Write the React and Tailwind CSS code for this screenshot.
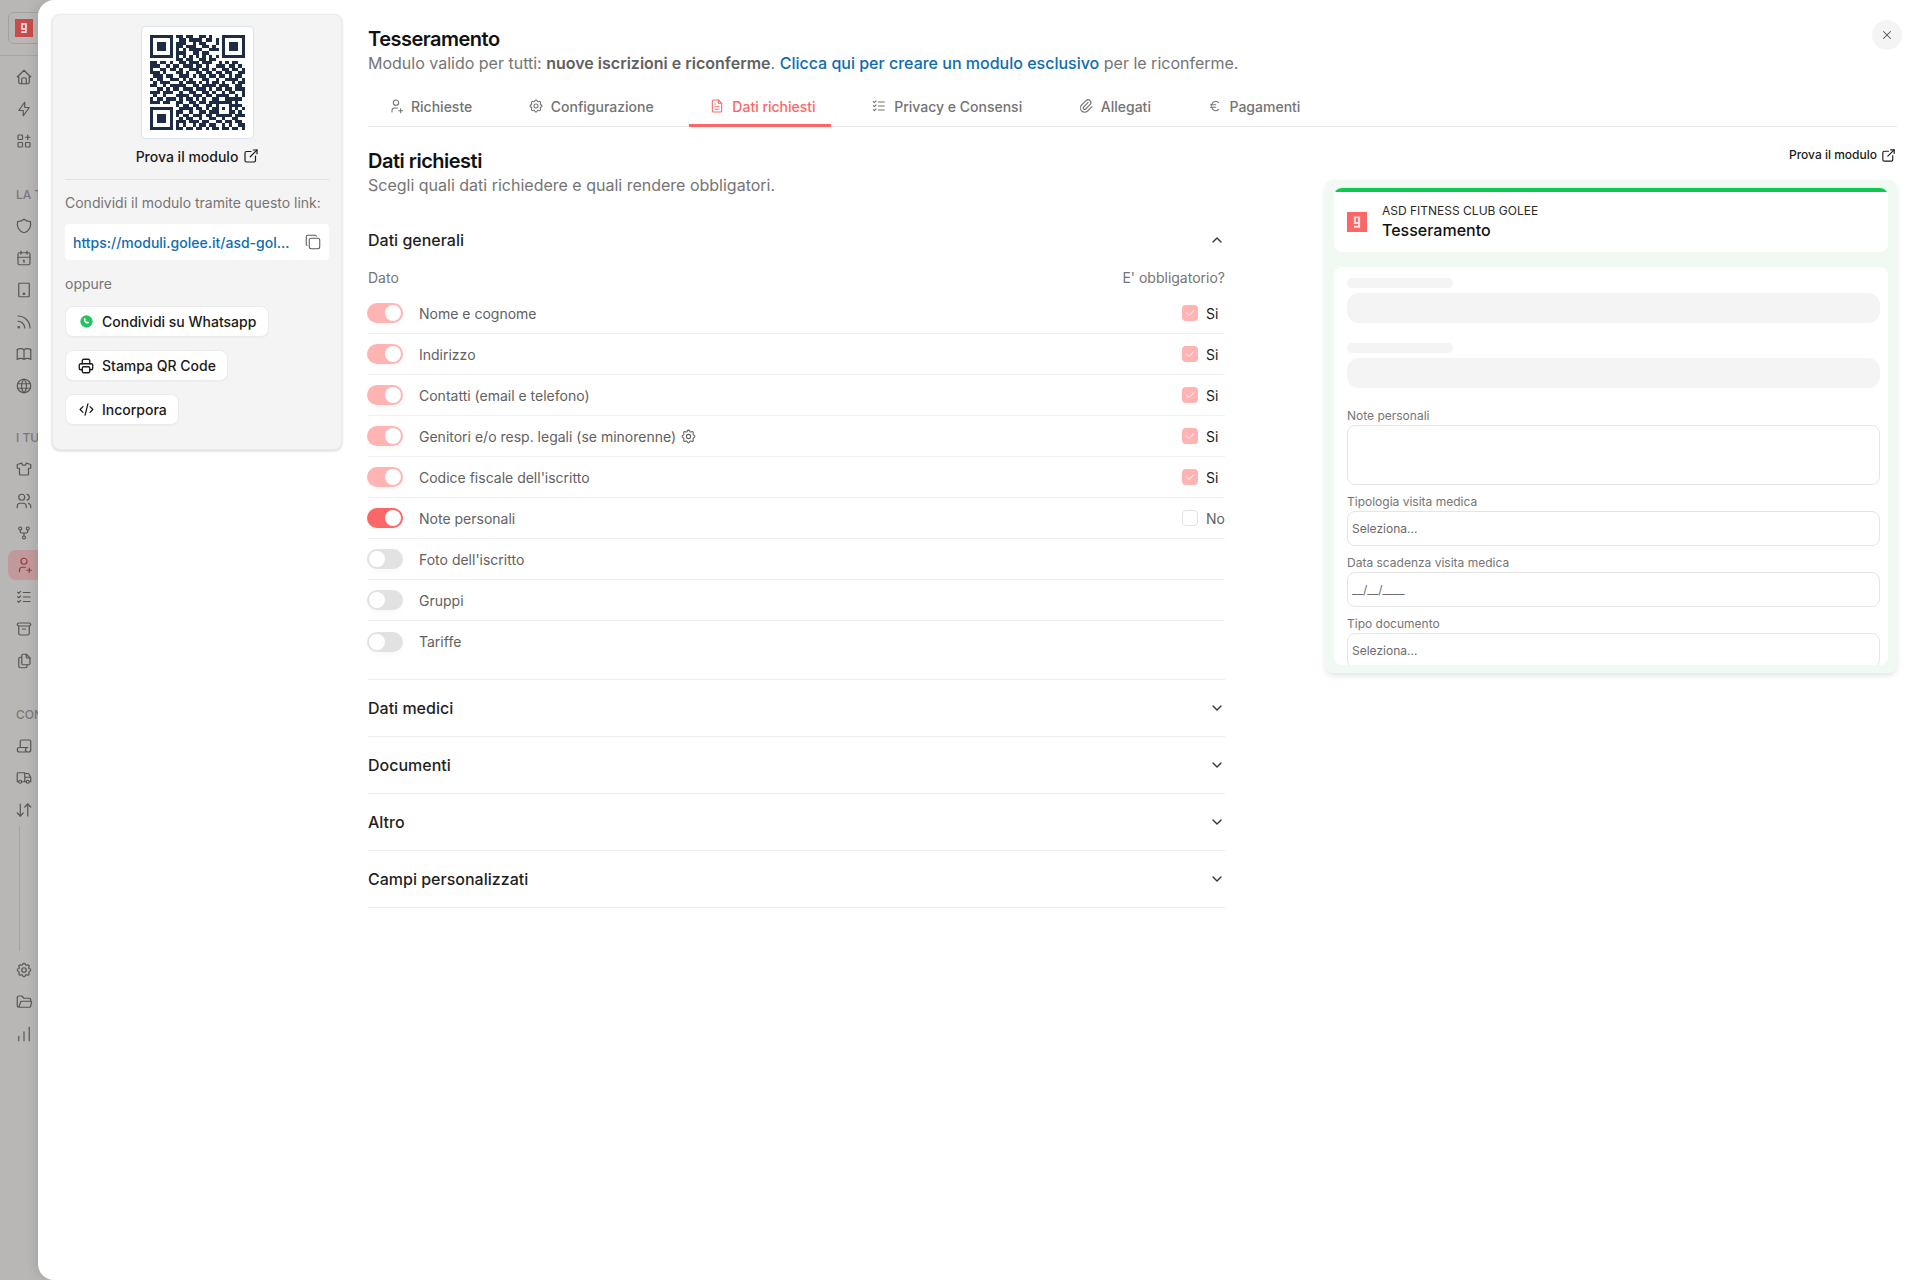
import React from "react";
import {
  TbHome, TbBolt, TbApps, TbShield, TbCalendar, TbDeviceTablet, TbRss, TbBook, TbWorld,
  TbShirt, TbUsers, TbGitFork, TbUserPlus, TbListCheck, TbArchive, TbFiles, TbScript,
  TbTruck, TbSettings, TbFolderOpen, TbExternalLink, TbCopy, TbPrinter, TbCode,
  TbFileText, TbPaperclip, TbCurrencyEuro, TbChevronUp, TbChevronDown, TbX, TbCheck,
} from "react-icons/tb";
import { ArrowDownUp, ChartNoAxesColumnIncreasing } from "lucide-react";

const QR = [
  "11111110110110011010001111111",
  "10000010011011110110101000001",
  "10111010111001011000101011101",
  "10111010110111001101001011101",
  "10111010101011110011101011101",
  "10000010111001101100001000001",
  "11111110101010101010101111111",
  "00000000110110011011000000000",
  "11011010011011101110010101100",
  "11100101101110110100111011010",
  "10011011010011101101001101101",
  "11101000110100110110110110011",
  "01110110011101011011011010110",
  "10110011101010001100100111101",
  "01011100010111010101101001011",
  "11001011111001101111011100110",
  "00110101101110111010110110111",
  "11101110010011001101001011001",
  "01001000111101110110111100101",
  "10110111010110101001100111110",
  "11101100110011011011111110100",
  "00000000101101100110100011110",
  "11111110011110110101101010101",
  "10000010110010011011100011010",
  "10111010101101110110111110111",
  "10111010010110010011001001100",
  "10111010111011101100110110110",
  "10000010101001011011001010011",
  "11111110110110110101101101101",
];
const qrPath = QR.map((row, y) =>
  row.split("").map((c, x) => (c === "1" ? `M${x} ${y}h1v1h-1z` : "")).join("")
).join("");

function GoleeMark({ className }) {
  return (
    <svg viewBox="0 0 16 16" className={className}>
      <rect width="16" height="16" fill="currentColor" />
      <path d="M5.5 3.5h5v9h-5v-1.6h3.4v-1.4H5.5zM7 5v3h1.9V5z" fill="#fff" fillOpacity="0.8" fillRule="evenodd" />
    </svg>
  );
}

function WhatsappDot() {
  return (
    <svg viewBox="0 0 16 16" className="h-[13px] w-[13px]">
      <circle cx="8" cy="8" r="7.6" fill="#22c55e" />
      <path d="M5.6 4.2c.5-.3.9-.2 1.1.3l.4.9c.1.3 0 .5-.2.7l-.3.4c.4.9 1.1 1.6 2.1 2.1l.4-.4c.2-.2.5-.3.7-.2l.9.5c.4.2.5.6.3 1-.4.8-1.2 1.2-2.1 1-2.3-.6-4-2.3-4.3-4.5-.1-.9.3-1.7 1-2.3z" fill="#fff" />
    </svg>
  );
}

function SideIcon({ icon: Icon, active }) {
  if (active) {
    return (
      <div className="my-px ml-[8px] flex h-[30px] w-[30px] shrink-0 items-center rounded-l-lg bg-[#c09a9a] pl-[7px] text-[#9c3a3c]">
        <Icon size={18} strokeWidth={1.6} className="shrink-0" />
      </div>
    );
  }
  return (
    <div className="flex h-[32px] w-[38px] shrink-0 items-center pl-[15px] text-[#595555]">
      <Icon size={18} strokeWidth={1.6} className="shrink-0" />
    </div>
  );
}

function SideLabel({ children, className }) {
  return (
    <div className={`h-[16px] w-[38px] overflow-hidden whitespace-nowrap pl-[16px] text-[12px] font-medium leading-[16px] text-[#7c7777] ${className}`}>
      {children}
    </div>
  );
}

function Sidebar() {
  return (
    <aside className="flex h-[1280px] w-[38px] shrink-0 flex-col overflow-hidden bg-[#b9b6b6]">
      <div className="h-[56px] shrink-0 border-b border-[#a8a5a5] pl-[8px] pt-[12px]">
        <div className="h-[32px] w-[60px] rounded-md border border-[#a3a0a0] pl-[6px] pt-[6px]">
          <GoleeMark className="h-[18px] w-[18px] text-[#c84c4b]" />
        </div>
      </div>
      <div className="mt-[5px] flex flex-col">
        <SideIcon icon={TbHome} />
        <SideIcon icon={TbBolt} />
        <SideIcon icon={TbApps} />
      </div>
      <SideLabel className="mt-[30px]">LA TUA</SideLabel>
      <div className="mt-[7px] flex flex-col">
        <SideIcon icon={TbShield} />
        <SideIcon icon={TbCalendar} />
        <SideIcon icon={TbDeviceTablet} />
        <SideIcon icon={TbRss} />
        <SideIcon icon={TbBook} />
        <SideIcon icon={TbWorld} />
      </div>
      <SideLabel className="mt-[28px]">I TUOI</SideLabel>
      <div className="mt-[7px] flex flex-col">
        <SideIcon icon={TbShirt} />
        <SideIcon icon={TbUsers} />
        <SideIcon icon={TbGitFork} />
        <SideIcon icon={TbUserPlus} active />
        <SideIcon icon={TbListCheck} />
        <SideIcon icon={TbArchive} />
        <SideIcon icon={TbFiles} />
      </div>
      <SideLabel className="mt-[30px]">CONTABILITÀ</SideLabel>
      <div className="mt-[7px] flex flex-col">
        <SideIcon icon={TbScript} />
        <SideIcon icon={TbTruck} />
        <SideIcon icon={ArrowDownUp} />
      </div>
      <div className="ml-[19px] h-[125px] w-px shrink-0 bg-[#b39a9c]" />
      <div className="mt-[3px] flex flex-col">
        <SideIcon icon={TbSettings} />
        <SideIcon icon={TbFolderOpen} />
        <SideIcon icon={ChartNoAxesColumnIncreasing} />
      </div>
    </aside>
  );
}

function ShareButton({ icon, children, className }) {
  return (
    <button className={`flex h-[31px] items-center gap-[7px] rounded-lg border border-[#ebebeb] bg-white pl-[11px] text-[14px] font-medium text-[#1a1a1a] shadow-[0_1px_1px_rgba(0,0,0,0.03)] ${className}`}>
      <span className="flex w-[18px] justify-center">{icon}</span>
      {children}
    </button>
  );
}

function LeftCard() {
  return (
    <section className="ml-[14px] mt-[14px] flex h-[436px] w-[290px] shrink-0 flex-col rounded-lg border border-[#ececec] bg-[#f4f4f4] px-[12px] pt-[11px] shadow-[0_1px_3px_rgba(0,0,0,0.18)]">
      <div className="mx-auto flex h-[113px] w-[113px] items-center justify-center rounded border border-[#dbe4ef] bg-white">
        <svg viewBox="0 0 29 29" className="h-[95px] w-[95px]" shapeRendering="crispEdges">
          <path d={qrPath} fill="#1e2b45" />
        </svg>
      </div>
      <div className="mt-[5px] flex h-[24px] items-center justify-center gap-[4px] pl-[2px] text-[14px] font-medium text-[#1a1a1a]">
        Prova il modulo <TbExternalLink size={18} strokeWidth={1.6} />
      </div>
      <div className="mt-[11px] h-px bg-[#e2e2e2]" />
      <p className="mt-[13px] text-[14px] leading-[20px] text-[#757575]">Condividi il modulo tramite questo link:</p>
      <div className="mt-[11px] flex h-[36px] items-center justify-between rounded bg-white pl-[8px] pr-[7px]">
        <span className="text-[14px] font-medium text-[#0f6cb0]">https://moduli.golee.it/asd-gol...</span>
        <TbCopy size={18} strokeWidth={1.4} className="text-[#5a5a5a]" />
      </div>
      <p className="mt-[14px] text-[14px] leading-[20px] text-[#757575]">oppure</p>
      <div className="mt-[12px] flex flex-col items-start gap-[13px]">
        <ShareButton className="w-[204px]" icon={<WhatsappDot />}>Condividi su Whatsapp</ShareButton>
        <ShareButton className="w-[163px]" icon={<TbPrinter size={18} strokeWidth={1.8} />}>Stampa QR Code</ShareButton>
        <ShareButton className="w-[114px]" icon={<TbCode size={17} strokeWidth={1.8} />}>Incorpora</ShareButton>
      </div>
    </section>
  );
}

const TABS = [
  { label: "Richieste", icon: TbUserPlus },
  { label: "Configurazione", icon: TbSettings },
  { label: "Dati richiesti", icon: TbFileText, active: true },
  { label: "Privacy e Consensi", icon: TbListCheck },
  { label: "Allegati", icon: TbPaperclip },
  { label: "Pagamenti", icon: TbCurrencyEuro },
];

function Tabs() {
  return (
    <nav className="mt-[13px] flex h-[39px] border-b border-[#e8e8e8]">
      {TABS.map((t) => (
        <div
          key={t.label}
          className={`-mb-px mr-[20px] flex items-center gap-[7px] border-b-[3px] pl-[20px] pr-[15.6px] text-[14px] font-medium ${t.active ? "border-[#fb6767] text-[#fb6767]" : "border-transparent text-[#737373]"}`}
        >
          <t.icon size={16} strokeWidth={1.6} />
          {t.label}
        </div>
      ))}
    </nav>
  );
}

const ROWS = [
  { label: "Nome e cognome", state: "locked", req: true },
  { label: "Indirizzo", state: "locked", req: true },
  { label: "Contatti (email e telefono)", state: "locked", req: true },
  { label: "Genitori e/o resp. legali (se minorenne)", state: "locked", req: true, gear: true },
  { label: "Codice fiscale dell'iscritto", state: "locked", req: true },
  { label: "Note personali", state: "on", req: false },
  { label: "Foto dell'iscritto", state: "off" },
  { label: "Gruppi", state: "off" },
  { label: "Tariffe", state: "off", last: true },
];

function Toggle({ state }) {
  const off = state === "off";
  const track = state === "on" ? "bg-[#fb6767]" : state === "locked" ? "bg-[#ffb3b3]" : "bg-[#e2e2e2]";
  return (
    <div className={`-ml-px flex h-[20px] w-[36px] shrink-0 items-center rounded-full px-[2px] ${track} ${off ? "justify-start" : "justify-end"} shadow-[0_4px_6px_-2px_rgba(0,0,0,0.04)]`}>
      <div className="h-[16px] w-[16px] rounded-full bg-white" />
    </div>
  );
}

function Row({ row }) {
  return (
    <div className={`flex h-[41px] items-center ${row.last ? "" : "border-b border-[#f0f0f0]"}`}>
      <Toggle state={row.state} />
      <span className="ml-[16px] flex items-center gap-[4px] text-[14px] text-[#616161]">
        {row.label}
        {row.gear && <TbSettings size={17} strokeWidth={1.5} />}
      </span>
      {row.state !== "off" && (
        <div className="ml-auto flex w-[43px] items-center gap-[8px]">
          {row.req ? (
            <div className="flex h-[16px] w-[16px] items-center justify-center rounded bg-[#ffb3b3] text-white">
              <TbCheck size={12} strokeWidth={2} />
            </div>
          ) : (
            <div className="h-[16px] w-[16px] rounded border border-[#e2e2e2] bg-white" />
          )}
          <span className={`text-[14px] ${row.req ? "text-[#1a1a1a]" : "text-[#616161]"}`}>{row.req ? "Si" : "No"}</span>
        </div>
      )}
    </div>
  );
}

function AccordionHeader({ title, open }) {
  const Chevron = open ? TbChevronUp : TbChevronDown;
  return (
    <div className={`flex items-center justify-between ${open ? "h-[56px]" : "h-[57px] border-b border-[#ececec]"}`}>
      <span className="text-[16px] font-medium text-[#1f1f1f]">{title}</span>
      <Chevron size={16} strokeWidth={2} className="text-[#333]" />
    </div>
  );
}

function Accordion() {
  return (
    <div className="mt-[14px] w-[857px]">
      <AccordionHeader title="Dati generali" open />
      <div className="flex h-[25px] items-start justify-between text-[14px] leading-[20px] text-[#757575]">
        <span>Dato</span>
        <span>E' obbligatorio?</span>
      </div>
      <div className="border-b border-[#ececec] pb-[17px]">
        {ROWS.map((r) => <Row key={r.label} row={r} />)}
      </div>
      <AccordionHeader title="Dati medici" />
      <AccordionHeader title="Documenti" />
      <AccordionHeader title="Altro" />
      <AccordionHeader title="Campi personalizzati" />
    </div>
  );
}

function Field({ label, className, children }) {
  return (
    <>
      <div className="h-[16px] text-[12px] leading-[16px] text-[#757575]">{label}</div>
      <div className={`mt-px flex items-center rounded-lg border border-[#e5e5e5] bg-white pl-[4px] text-[12px] text-[#6b6b6b] ${className}`}>
        {children}
      </div>
    </>
  );
}

function Preview() {
  return (
    <div className="ml-[100px] flex w-[572px] flex-col">
      <div className="mt-[20px] flex h-[16px] items-center justify-end gap-[3px] text-[12px] font-medium text-[#1a1a1a]">
        Prova il modulo <TbExternalLink size={17} strokeWidth={1.6} />
      </div>
      <div className="mt-[17px] h-[493px] rounded-lg bg-[#f0faf3] px-[9px] py-[8px] shadow-[0_3px_6px_-1px_rgba(0,0,0,0.12)]">
        <div className="h-[64px] overflow-hidden rounded-lg bg-white">
          <div className="h-[4px] rounded-full bg-[#0fc850]" />
          <div className="flex items-start pl-[13px] pt-[9px]">
            <GoleeMark className="mt-[11px] h-[20px] w-[20px] text-[#fb6767]" />
            <div className="ml-[15px] flex flex-col">
              <span className="text-[12px] leading-[20px] text-[#2a2a2a]">ASD FITNESS CLUB GOLEE</span>
              <span className="-mt-px text-[16px] font-medium leading-[20px] text-[#111]">Tesseramento</span>
            </div>
          </div>
        </div>
        <div className="mt-[15px] h-[398px] overflow-hidden rounded-lg bg-white pl-[13px] pr-[8px] pt-[11px]">
          <div className="h-[10px] w-[106px] rounded-full bg-[#f4f4f4]" />
          <div className="mt-[5px] h-[30px] rounded-xl bg-[#f4f4f4]" />
          <div className="mt-[20px] h-[10px] w-[106px] rounded-full bg-[#f4f4f4]" />
          <div className="mt-[5px] h-[30px] rounded-xl bg-[#f4f4f4]" />
          <div className="mt-[20px]" />
          <Field label="Note personali" className="h-[60px]" />
          <div className="mt-[9px]" />
          <Field label="Tipologia visita medica" className="h-[35px]">Seleziona...</Field>
          <div className="mt-[9px]" />
          <Field label="Data scadenza visita medica" className="h-[35px]">__/__/____</Field>
          <div className="mt-[9px]" />
          <Field label="Tipo documento" className="h-[35px]">Seleziona...</Field>
        </div>
      </div>
    </div>
  );
}

export default function App() {
  return (
    <div className="flex h-[1280px] w-[1920px] overflow-hidden bg-[#b9b6b6] font-['Inter',sans-serif]">
      <Sidebar />
      <div className="relative flex h-[1280px] w-[1882px] rounded-l-2xl bg-white shadow-[-4px_0_10px_rgba(0,0,0,0.08)]">
        <LeftCard />
        <main className="ml-[26px] w-[1529px] pt-[27px]">
          <h1 className="text-[20px] font-semibold leading-[24px] tracking-[-0.5px] text-[#111]">Tesseramento</h1>
          <p className="text-[16px] leading-[24px] text-[#757575]">
            Modulo valido per tutti: <b className="font-semibold text-[#616161]">nuove iscrizioni e riconferme</b>. <span className="font-medium text-[#0f6cb0]">Clicca qui per creare un modulo esclusivo</span> per le riconferme.
          </p>
          <Tabs />
          <div className="flex">
            <div>
              <h2 className="mt-[22px] text-[20px] font-semibold leading-[24px] tracking-[-0.5px] text-[#111]">Dati richiesti</h2>
              <p className="text-[16px] leading-[24px] text-[#757575]">Scegli quali dati richiedere e quali rendere obbligatori.</p>
              <div className="pt-px">
                <Accordion />
              </div>
            </div>
            <Preview />
          </div>
        </main>
        <button className="absolute right-[18px] top-[20px] flex h-[30px] w-[30px] items-center justify-center rounded-full bg-[#f4f4f4] text-[#555]">
          <TbX size={14} strokeWidth={1.8} />
        </button>
      </div>
    </div>
  );
}
